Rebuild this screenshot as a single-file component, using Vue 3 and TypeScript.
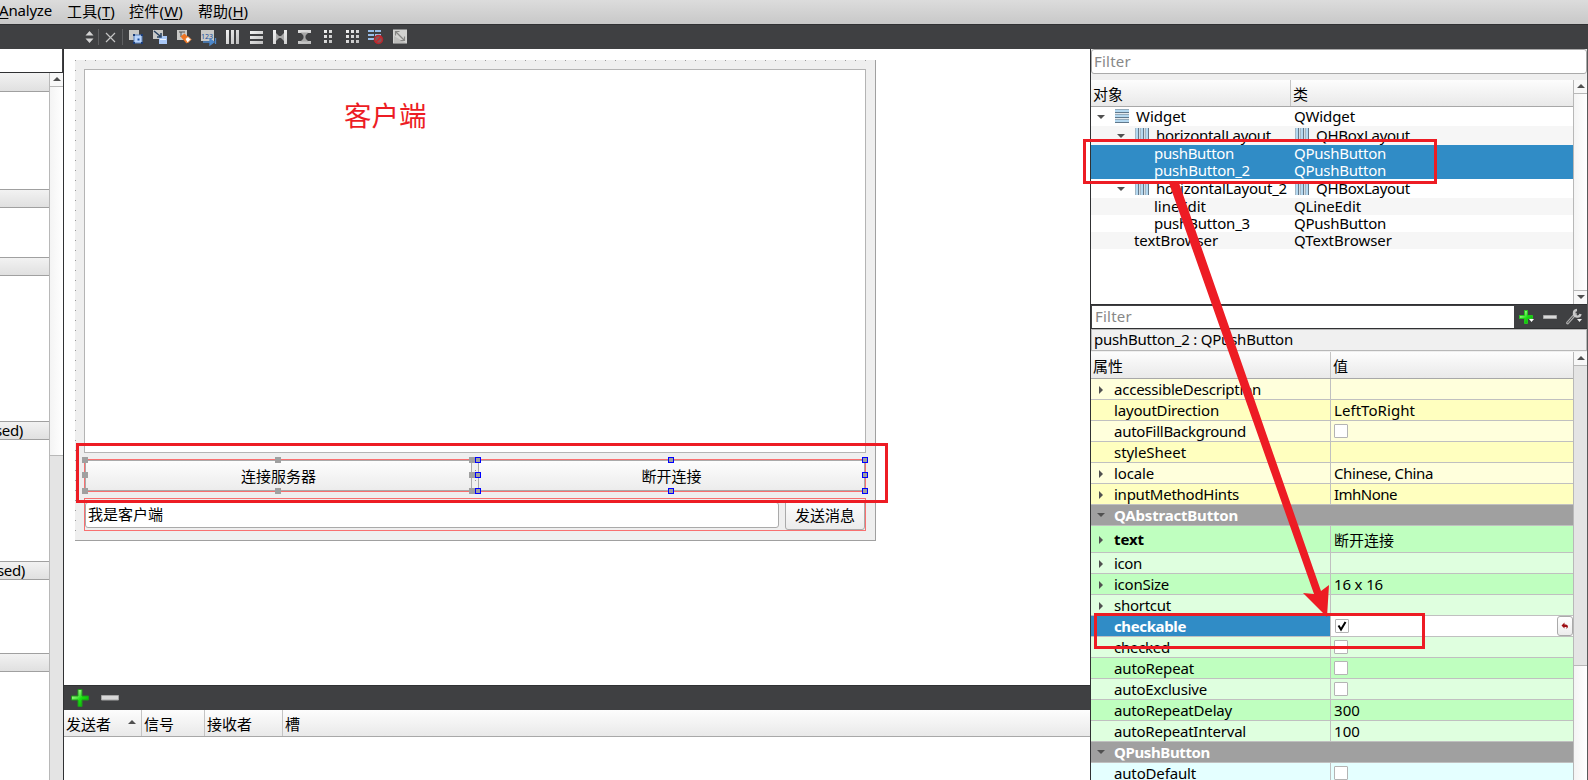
<script setup lang="ts">
import type { Directive } from 'vue'

interface TreeRow {
  name: string
  nameWidth: number
  cls: string
  clsWidth: number
  level: number
  height: number
  icon?: 'v' | 'h'
  clsIcon?: boolean
  open?: boolean
  alt?: boolean
  selected?: boolean
}

interface PropRow {
  name: string
  width: number
  tone: string
  value?: string
  valueWidth?: number
  check?: 'on' | 'off'
  arrow?: boolean
  bold?: boolean
  tall?: boolean
  group?: boolean
  active?: boolean
}

// Spreads a label over a fixed width by adjusting its tracking.
const vFit: Directive<HTMLElement, number | undefined> = {
  mounted(el, { value }) {
    if (!value) return
    const count = (el.textContent ?? '').length
    const natural = el.getBoundingClientRect().width
    el.style.letterSpacing = `${(value - natural) / count}px`
  },
}

const menus = [
  { pre: '', key: 'A', post: 'nalyze', width: 53, cls: 'm1' },
  { pre: '工具(', key: 'T', post: ')', width: 48, cls: 'm2' },
  { pre: '控件(', key: 'W', post: ')', width: 54, cls: 'm3' },
  { pre: '帮助(', key: 'H', post: ')', width: 50, cls: 'm4' },
]

const boxRows = [
  { cls: 'c1', label: '' },
  { cls: 'c2', label: '' },
  { cls: 'c3', label: '' },
  { cls: 'c4', label: 'sed)' },
  { cls: 'c5', label: 'sed)' },
  { cls: 'c6', label: '' },
]

const tree: TreeRow[] = [
  { name: 'Widget', nameWidth: 50, cls: 'QWidget', clsWidth: 61, level: 0, height: 19, icon: 'v', open: true },
  { name: 'horizontalLayout', nameWidth: 115, cls: 'QHBoxLayout', clsWidth: 94, level: 1, height: 19, icon: 'h', clsIcon: true, open: true, alt: true },
  { name: 'pushButton', nameWidth: 80, cls: 'QPushButton', clsWidth: 92, level: 2, height: 17, selected: true },
  { name: 'pushButton_2', nameWidth: 96, cls: 'QPushButton', clsWidth: 92, level: 2, height: 17, selected: true },
  { name: 'horizontalLayout_2', nameWidth: 131, cls: 'QHBoxLayout', clsWidth: 94, level: 1, height: 19, icon: 'h', clsIcon: true, open: true },
  { name: 'lineEdit', nameWidth: 52, cls: 'QLineEdit', clsWidth: 67, level: 2, height: 17, alt: true },
  { name: 'pushButton_3', nameWidth: 96, cls: 'QPushButton', clsWidth: 92, level: 2, height: 17 },
  { name: 'textBrowser', nameWidth: 84, cls: 'QTextBrowser', clsWidth: 98, level: 3, height: 17, alt: true },
]

const props: PropRow[] = [
  { name: 'accessibleDescription', width: 147, tone: 'y1', arrow: true },
  { name: 'layoutDirection', width: 105, tone: 'y2', value: 'LeftToRight', valueWidth: 81 },
  { name: 'autoFillBackground', width: 132, tone: 'y1', check: 'off' },
  { name: 'styleSheet', width: 72, tone: 'y2' },
  { name: 'locale', width: 40, tone: 'y1', arrow: true, value: 'Chinese, China', valueWidth: 99 },
  { name: 'inputMethodHints', width: 125, tone: 'y2', arrow: true, value: 'ImhNone', valueWidth: 63 },
  { name: 'QAbstractButton', width: 124, tone: 'grp', group: true },
  { name: 'text', width: 30, tone: 'g2', arrow: true, bold: true, tall: true, value: '断开连接', valueWidth: 60 },
  { name: 'icon', width: 28, tone: 'g1', arrow: true },
  { name: 'iconSize', width: 55, tone: 'g2', arrow: true, value: '16 x 16', valueWidth: 49 },
  { name: 'shortcut', width: 57, tone: 'g1', arrow: true },
  { name: 'checkable', width: 72, tone: 'act', bold: true, check: 'on', active: true },
  { name: 'checked', width: 56, tone: 'g1', check: 'off' },
  { name: 'autoRepeat', width: 80, tone: 'g2', check: 'off' },
  { name: 'autoExclusive', width: 93, tone: 'g1', check: 'off' },
  { name: 'autoRepeatDelay', width: 118, tone: 'g2', value: '300', valueWidth: 26 },
  { name: 'autoRepeatInterval', width: 132, tone: 'g1', value: '100', valueWidth: 26 },
  { name: 'QPushButton', width: 96, tone: 'grp', group: true },
  { name: 'autoDefault', width: 82, tone: 'b1', check: 'off' },
]

const xs1 = [82, 275, 469]
const xs2 = [475, 668, 862]
const ys = [457, 472, 488]
const greyHandles = xs1.flatMap((x) => ys.map((y) => ({ x, y }))).filter((p) => !(p.x === 275 && p.y === 472))
const blueHandles = xs2.flatMap((x) => ys.map((y) => ({ x, y }))).filter((p) => !(p.x === 668 && p.y === 472))
</script>

<template>
  <div class="window">
    <nav class="menubar">
      <span v-for="m in menus" :key="m.key" v-fit="m.width" :class="m.cls">{{ m.pre }}<u>{{ m.key }}</u>{{ m.post }}</span>
    </nav>

    <div class="toolbar">
      <svg width="420" height="25" viewBox="0 24 420 25">
        <defs>
          <linearGradient id="lt" x1="0" y1="0" x2="1" y2="1">
            <stop offset="0" stop-color="#f4f4f4" /><stop offset="1" stop-color="#bcbcbc" />
          </linearGradient>
        </defs>
        <path d="M85.500 35.500L89.500 31l4 4.500zM85.500 38.500L89.500 43l4-4.500z" fill="#d4d4d4" />
        <path d="M98.500 29v16M122.500 29v16" stroke="#5f6062" />
        <path d="M106 33l9 9M115 33l-9 9" stroke="#c4c4c4" stroke-width="1.200" />
        <!-- edit widgets -->
        <g>
          <path d="M129 30h10v10h-10z" fill="#c9c9c7" />
          <path d="M134 35h8v8h-8z" fill="#b9d4fb" stroke="#5c83bd" />
          <path d="M133 34h2v2h-2zM141 34h2v2h-2zM133 42h2v2h-2zM141 42h2v2h-2z" fill="#1c3d78" />
          <path d="M137.500 38.500h2v2h-2z" fill="#174b9c" />
        </g>
        <!-- edit signals -->
        <g>
          <path d="M153 30h10v9h-10z" fill="#c9c9c7" />
          <path d="M159 36h8v8h-8z" fill="#a9c8f6" />
          <path d="M160 39.500h6" stroke="#eef5ff" />
          <path d="M154 31l6 5M161 33v4h-4" stroke="#263f5f" stroke-width="1.500" fill="none" />
        </g>
        <!-- edit buddies -->
        <g>
          <path d="M177 30h10v10h-10z" fill="#c9c9c7" />
          <path d="M179 32h6M181 32v5" stroke="#555" />
          <path d="M180.500 36.500l4-3 6 6-4 4z" fill="#ed7525" />
          <path d="M185 39l3-2.500 3 3-3.500 3.500z" fill="#fff" stroke="#ef812f" />
        </g>
        <!-- edit tab order -->
        <g>
          <path d="M201 30h13v11h-13z" fill="#c9c9c7" />
          <text x="201" y="39" font-size="7" fill="#174b9c" textLength="12">123</text>
          <path d="M203 42h9M210 39l4 3-4 3zM215.500 38v6" stroke="#4d87c9" stroke-width="1.300" fill="#4d87c9" />
        </g>
        <g fill="url(#lt)">
          <path d="M226 30h3v14h-3zM231 30h3v14h-3zM236 30h3v14h-3z" />
          <path d="M250 31h13v3h-13zM250 36h13v3h-13zM250 41h13v3h-13z" />
          <path d="M273 30h3v14h-3zM284 30h3v14h-3zM298 30h13v3h-13zM298 41h13v3h-13z" />
          <path d="M324 30h3v3h-3zM329 30h3v3h-3zM324 35h3v3h-3zM329 35h3v3h-3zM324 40h3v3h-3zM329 40h3v3h-3z" />
          <path d="M346 30h3v3h-3zM351 30h3v3h-3zM356 30h3v3h-3zM346 35h3v3h-3zM351 35h3v3h-3zM356 35h3v3h-3zM346 40h3v3h-3zM351 40h3v3h-3zM356 40h3v3h-3z" />
        </g>
        <path d="M276 33l4 4-4 4zM284 33l-4 4 4 4zM300.500 32.500l4 4 4-4zM300.500 41.500l4-4 4 4z" fill="#a6a6a6" />
        <path d="M276 37h8M304.500 33v8" stroke="#a6a6a6" stroke-width="2" />
        <!-- break layout -->
        <path d="M368 30h6v2h-6zM375 30h6v2h-6zM368 34h6v2h-6zM375 34h6v2h-6zM368 38h6v2h-6z" fill="#98bde8" />
        <circle cx="378.500" cy="39.500" r="4" fill="#8a5558" stroke="#b9252b" stroke-width="1.500" />
        <path d="M375.500 42.500l6-6" stroke="#c9252b" stroke-width="1.500" />
        <!-- adjust size -->
        <path d="M393 29.500h14v14h-14z" fill="#d2d2d0" />
        <path d="M394 36v7h12z" fill="#bdbdbb" />
        <path d="M396 32l8 8M395.500 35.500v-4h4M400.500 40.500h4v-4" stroke="#858583" stroke-width="1.200" fill="none" />
      </svg>
    </div>

    <main class="body">
      <aside class="widget-box">
        <div class="box-filter"></div>
        <div class="box-main">
          <div class="box-list">
            <div v-for="r in boxRows" :key="r.cls" class="category" :class="r.cls">
              <span v-if="r.label" v-fit="28">{{ r.label }}</span>
            </div>
          </div>
          <div class="vscroll left">
            <div class="btn"><i class="up"></i></div>
            <div class="part light"></div>
            <div class="part grey"></div>
          </div>
        </div>
      </aside>

      <section class="center">
        <div class="canvas">
          <div class="form">
            <div class="browser"><span>客户端</span></div>
            <div class="hbox first">
              <div class="push">连接服务器</div>
              <div class="push">断开连接</div>
            </div>
            <div class="hbox second">
              <div class="line-edit">我是客户端</div>
              <div class="push send">发送消息</div>
            </div>
          </div>
        </div>
        <div class="signal-bar">
          <svg width="60" height="24" viewBox="64 686 60 24">
            <defs>
              <linearGradient id="gp" x1="0" y1="0" x2="1" y2="1">
                <stop offset="0.200" stop-color="#a8f58f" /><stop offset="0.550" stop-color="#18e010" /><stop offset="1" stop-color="#059a05" />
              </linearGradient>
            </defs>
            <path d="M78 689.500h4v6.500h6.500v4H82v6.500h-4V700h-6.500v-4H78z" fill="url(#gp)" stroke="#1f9a1b" />
            <path d="M101.500 695.500h17v4.500h-17z" fill="#d8d8d8" stroke="#a5a5a5" />
          </svg>
        </div>
        <div class="signal-head head">
          <div class="h1">发送者<i class="up"></i></div>
          <div class="h2">信号</div>
          <div class="h3">接收者</div>
          <div class="h4">槽</div>
        </div>
        <div class="signal-body"></div>
      </section>

      <aside class="right">
        <div class="obj-filter"><span v-fit="37">Filter</span></div>
        <div class="obj">
          <div class="obj-main">
            <div class="head obj-head"><div>对象</div><div>类</div></div>
            <div
              v-for="(r, i) in tree"
              :key="i"
              class="tree-row"
              :class="{ alt: r.alt, selected: r.selected }"
              :style="{ height: r.height + 'px' }"
            >
              <div class="name" :class="'lv' + r.level">
                <i v-if="r.open" class="down"></i>
                <i v-if="r.icon" class="layout" :class="r.icon"></i>
                <span v-fit="r.nameWidth">{{ r.name }}</span>
              </div>
              <div class="cls">
                <i v-if="r.clsIcon" class="layout h"></i>
                <span v-fit="r.clsWidth">{{ r.cls }}</span>
              </div>
            </div>
          </div>
          <div class="vscroll">
            <div class="btn"><i class="up"></i></div>
            <div class="part fill"></div>
            <div class="btn bottom"><i class="down"></i></div>
          </div>
        </div>

        <div class="prop-bar">
          <div class="prop-filter"><span v-fit="37">Filter</span></div>
          <svg width="73" height="23" viewBox="1514 305 73 23">
            <path d="M1524.500 310.500h3v5h5v3h-5v5h-3v-5h-5v-3h5z" fill="url(#gp)" stroke="#26c41e" />
            <path d="M1529 319h5l-2.500 3z" fill="#fff" />
            <path d="M1543.500 315.500h13v3h-13z" fill="#d8d8d8" stroke="#a8a8a8" />
            <path d="M1567.500 323l8-9" stroke="#a8a8a8" stroke-width="3" stroke-linecap="round" />
            <path d="M1567.500 323l7-8" stroke="#4e4f50" stroke-width="1" />
            <path d="M1577 310a3.300 3.300 0 1 0 3.500 4" stroke="#c9c9c9" stroke-width="2.400" fill="none" />
            <path d="M1577 319h5l-2.500 3z" fill="#eee" />
          </svg>
        </div>
        <div class="object-name"><span v-fit="199">pushButton_2 : QPushButton</span></div>
        <div class="prop">
          <div class="prop-main">
            <div class="head prop-head"><div>属性</div><div>值</div></div>
            <div v-for="p in props" :key="p.name" class="prop-row" :class="[p.tone, { bold: p.bold, tall: p.tall, group: p.group }]">
              <div class="pname">
                <i v-if="p.arrow" class="rightward"></i>
                <i v-if="p.group" class="down"></i>
                <span v-fit="p.width">{{ p.name }}</span>
              </div>
              <div v-if="!p.group" class="pval">
                <span v-if="p.value" v-fit="p.valueWidth">{{ p.value }}</span>
                <i v-if="p.check" class="check" :class="p.check">
                  <svg v-if="p.check === 'on'" width="12" height="12" viewBox="0 0 12 12">
                    <path d="M2.500 5.500L5 9.500 9.500 2" fill="none" stroke="#000" stroke-width="2" />
                  </svg>
                </i>
                <b v-if="p.active" class="reset">
                  <svg width="8" height="8" viewBox="0 0 8 8">
                    <path d="M0.500 3.500L3.500 0.500v2h1.500q2 0 2 2.500l-1.500 2v-2h-2v1.500z" fill="#9d0f14" />
                  </svg>
                </b>
              </div>
            </div>
          </div>
          <div class="vscroll">
            <div class="btn"><i class="up"></i></div>
            <div class="part grey slider"></div>
            <div class="part light"></div>
          </div>
        </div>
      </aside>
    </main>

    <svg class="overlay" width="1588" height="780" viewBox="0 0 1588 780">
      <g shape-rendering="crispEdges">
        <rect v-for="(p, i) in greyHandles" :key="'g' + i" :x="p.x" :y="p.y" width="6" height="6" fill="#a0a0a0" />
        <rect v-for="(p, i) in blueHandles" :key="'b' + i" :x="p.x + 0.5" :y="p.y + 0.5" width="5" height="5" fill="#a0a0a0" stroke="#0000ff" />
      </g>
      <g fill="none" stroke="#ed1c24" stroke-width="3">
        <rect x="77.500" y="444.500" width="809" height="57" />
        <rect x="1084.500" y="140.500" width="351" height="42" />
        <rect x="1095.500" y="614.500" width="328" height="33" />
      </g>
      <path d="M1169 183h10L1321 591l8-6-2 32-24-24 11 1z" fill="#ed1c24" />
    </svg>
  </div>
</template>

<style>
html,
body {
  margin: 0;
  overflow: hidden;
}
</style>

<style scoped>
* {
  box-sizing: border-box;
}
.window {
  position: relative;
  display: flex;
  flex-direction: column;
  width: 1588px;
  height: 780px;
  overflow: hidden;
  background: #fff;
  color: #000;
  font: 15px/18px 'Noto Sans', 'Noto Sans CJK SC', sans-serif;
  white-space: nowrap;
}
span {
  flex: none;
}
.menubar {
  display: flex;
  flex: none;
  height: 24px;
  padding-top: 2px;
  background: linear-gradient(#dcdcdc, #c8c8c8);
}
.menubar u {
  text-underline-offset: 2px;
}
.m1 { margin: -1px 0 0 -1px; }
.m2 { margin-left: 15px; }
.m3 { margin-left: 14px; }
.m4 { margin-left: 15px; }
.toolbar {
  flex: none;
  height: 25px;
  background: #3f4042;
  border-top: 1px solid #303133;
}
.toolbar svg {
  display: block;
  margin-top: -1px;
}
.body {
  display: flex;
  flex: 1;
  min-height: 0;
}
.widget-box {
  display: flex;
  flex-direction: column;
  width: 64px;
  border-right: 1px solid #303133;
}
.box-filter {
  flex: none;
  height: 24px;
  border-right: 1px solid #3f4042;
  border-bottom: 1px solid #303133;
}
.box-main {
  display: flex;
  flex: 1;
  min-height: 0;
}
.box-list {
  width: 49px;
  overflow: hidden;
}
.category {
  display: flex;
  align-items: center;
  height: 19px;
  padding-bottom: 2px;
  border-top: 1px solid #a0a0a0;
  border-bottom: 1px solid #a0a0a0;
  background: linear-gradient(#f2f2f2, #e0e0e0);
}
.c1 { border-top: 0; }
.c2 { margin-top: 97px; }
.c3 { margin-top: 49px; }
.c4 { margin-top: 145px; }
.c4 span { margin-left: -5px; }
.c5 { margin-top: 121px; }
.c5 span { margin-left: -3px; }
.c6 { margin-top: 73px; }
.vscroll {
  display: flex;
  flex-direction: column;
  flex: none;
  width: 14px;
  border-left: 1px solid #b8b8b8;
}
.btn {
  display: flex;
  align-items: center;
  justify-content: center;
  flex: none;
  height: 14px;
  padding-bottom: 1px;
  border-bottom: 1px solid #b8b8b8;
  background: #f8f8f8;
}
.btn.bottom {
  border-bottom: 0;
  border-top: 1px solid #b8b8b8;
}
.part {
  flex: 1;
}
.part.light,
.part.fill {
  background: linear-gradient(90deg, #f4f4f4, #fff);
}
.part.grey {
  background: #e4e4e4;
}
.left .light {
  flex: none;
  height: 369px;
  border-bottom: 1px solid #b8b8b8;
}
.part.slider {
  flex: none;
  height: 300px;
  border-bottom: 1px solid #b8b8b8;
}
.up,
.down,
.rightward {
  width: 0;
  height: 0;
  border: 4px solid transparent;
}
.up {
  border-top: 0;
  border-bottom-color: #505050;
}
.down {
  border-bottom: 0;
  border-top-color: #505050;
}
.rightward {
  border-right: 0;
  border-left-color: #505050;
}
.center {
  display: flex;
  flex-direction: column;
  width: 1026px;
}
.canvas {
  flex: none;
  height: 636px;
  padding: 11px 0 0 11px;
}
.form {
  display: flex;
  flex-direction: column;
  width: 801px;
  height: 481px;
  padding: 9px 9px 0;
  border-right: 1px solid #a0a0a0;
  border-bottom: 1px solid #a0a0a0;
  background: radial-gradient(circle at 0.5px 0.5px, #9a9a9a 0.6px, transparent 0.7px) 0 0 / 10px 10px #efefef;
}
.browser {
  height: 384px;
  width: 782px;
  padding: 30px 0 0 259px;
  border: 1px solid #b4b4b4;
  background: #fff;
  color: #ed1c24;
  font-size: 27.500px;
  line-height: 32px;
}
.hbox {
  display: flex;
  gap: 6px;
  width: 782px;
  height: 33px;
  margin-top: 6px;
  border: 1px solid #f87070;
}
.push {
  flex: 1;
  display: flex;
  align-items: center;
  justify-content: center;
  border: 1px solid #aaa;
  border-radius: 2px;
  background: linear-gradient(#fdfdfd, #ececec);
}
.push.send {
  flex: none;
  width: 80px;
  height: 30px;
  margin-top: 1px;
  border-radius: 3px;
}
.line-edit {
  flex: 1;
  height: 26px;
  margin-top: 3px;
  padding: 2px 0 0 2px;
  border: 1px solid #aaa;
  border-radius: 3px;
  background: #fff;
}
.signal-bar {
  flex: none;
  height: 25px;
  background: #3f4042;
  border-top: 1px solid #303133;
}
.signal-bar svg {
  display: block;
}
.head {
  display: flex;
  flex: none;
  height: 27px;
  border-bottom: 1px solid #a8a8a8;
  background: linear-gradient(#fdfdfd, #e9e9e9);
  line-height: 28px;
}
.head > div + div {
  border-left: 1px solid #c4c4c4;
  padding-left: 2px;
}
.h1 {
  display: flex;
  width: 77px;
  padding-left: 2px;
}
.h1 .up {
  margin: 10px 0 0 17px;
}
.h2 { width: 63px; }
.h3 { width: 78px; }
.right {
  display: flex;
  flex-direction: column;
  width: 498px;
  border-left: 1px solid #303133;
  border-right: 1px solid #58595a;
  background: #efefef;
}
.obj-filter {
  flex: none;
  height: 25px;
  padding: 2px 0 0 2px;
  border: 1px solid #aaa;
  border-radius: 3px;
  background: #fff;
  color: #888;
}
.obj {
  display: flex;
  flex: none;
  height: 224px;
  margin-top: 6px;
}
.obj-main,
.prop-main {
  width: 482px;
  background: #fff;
}
.obj-head > div:first-child {
  width: 199px;
  padding-left: 2px;
}
.obj-head {
  line-height: 29px;
}
.tree-row {
  display: flex;
}
.tree-row.alt {
  background: #f6f6f6;
}
.tree-row.selected {
  background: #308cc6;
  color: #fff;
}
.name,
.cls {
  display: flex;
  align-items: center;
}
.name span,
.cls span {
  margin-top: -2px;
}
.name {
  width: 203px;
}
.name .down {
  margin-right: 10px;
}
.lv0 { padding-left: 6px; }
.lv1 { padding-left: 26px; }
.lv2 { padding-left: 63px; }
.lv3 { padding-left: 43px; }
.layout {
  width: 14px;
  height: 14px;
  margin: -1px 7px 0 0;
}
.layout.h {
  background: repeating-linear-gradient(90deg, #a3b6c4 0 1px, #b4d8f0 1px 3px, #60788c 3px 4px, #d5dde3 4px 5px);
}
.layout.v {
  background: repeating-linear-gradient(#94abbc 0 1px, #b4d8f0 1px 3px, #60788c 3px 4px, #e4eaee 4px 5px);
}
.cls .layout {
  margin-left: 1px;
}
.prop-bar {
  display: flex;
  flex: none;
  height: 25px;
  background: #3f4042;
  border-top: 1px solid #303133;
  border-bottom: 1px solid #303133;
}
.prop-filter {
  width: 422px;
  height: 22px;
  margin: 1px 0 0 1px;
  padding: 1px 0 0 3px;
  background: #fff;
  color: #888;
}
.object-name {
  flex: none;
  height: 22px;
  margin-bottom: 1px;
  border: 1px solid #b8b8b8;
  padding-left: 2px;
  background: #f0f0f0;
}
.prop {
  display: flex;
  flex: 1;
  min-height: 0;
  overflow: hidden;
}
.prop-head > div:first-child {
  width: 239px;
  padding-left: 2px;
}
.prop-row {
  display: flex;
  height: 21px;
  border-bottom: 1px solid #c0c0c0;
}
.prop-row.tall {
  height: 27px;
}
.pname {
  display: flex;
  align-items: center;
  width: 239px;
  padding-left: 23px;
}
.pname .down {
  margin: -1px 9px 0 -17px;
}
.pname .rightward {
  margin: 1px 11px 0 -15px;
}
.pval {
  display: flex;
  flex: 1;
  align-items: center;
  border-left: 1px solid #c0c0c0;
  padding-left: 3px;
}
.tall .pval {
  padding-top: 2px;
}
.y1 { background: #ffffdc; }
.y2 { background: #ffffbf; }
.g1 { background: #dfffdf; }
.g2 { background: #bfffbf; }
.b1 { background: #e4ffff; }
.group {
  background: #a0a0a0;
  color: #fff;
  font-weight: 700;
}
.bold .pname {
  font-weight: 700;
}
.act {
  background: #fff;
}
.act .pname {
  background: #308cc6;
  color: #fff;
}
.check {
  width: 14px;
  height: 14px;
  border: 1px solid #b4b4b4;
  border-radius: 1px;
  background: #fff;
}
.check.on {
  margin: -1px 0 0 1px;
}
.check svg {
  display: block;
}
.reset {
  display: flex;
  align-items: center;
  justify-content: center;
  width: 16px;
  height: 20px;
  margin-left: auto;
  border: 1px solid #aaa;
  border-radius: 3px;
  background: linear-gradient(#fff, #ececec);
}
.overlay {
  position: absolute;
  left: 0;
  top: 0;
}
</style>
